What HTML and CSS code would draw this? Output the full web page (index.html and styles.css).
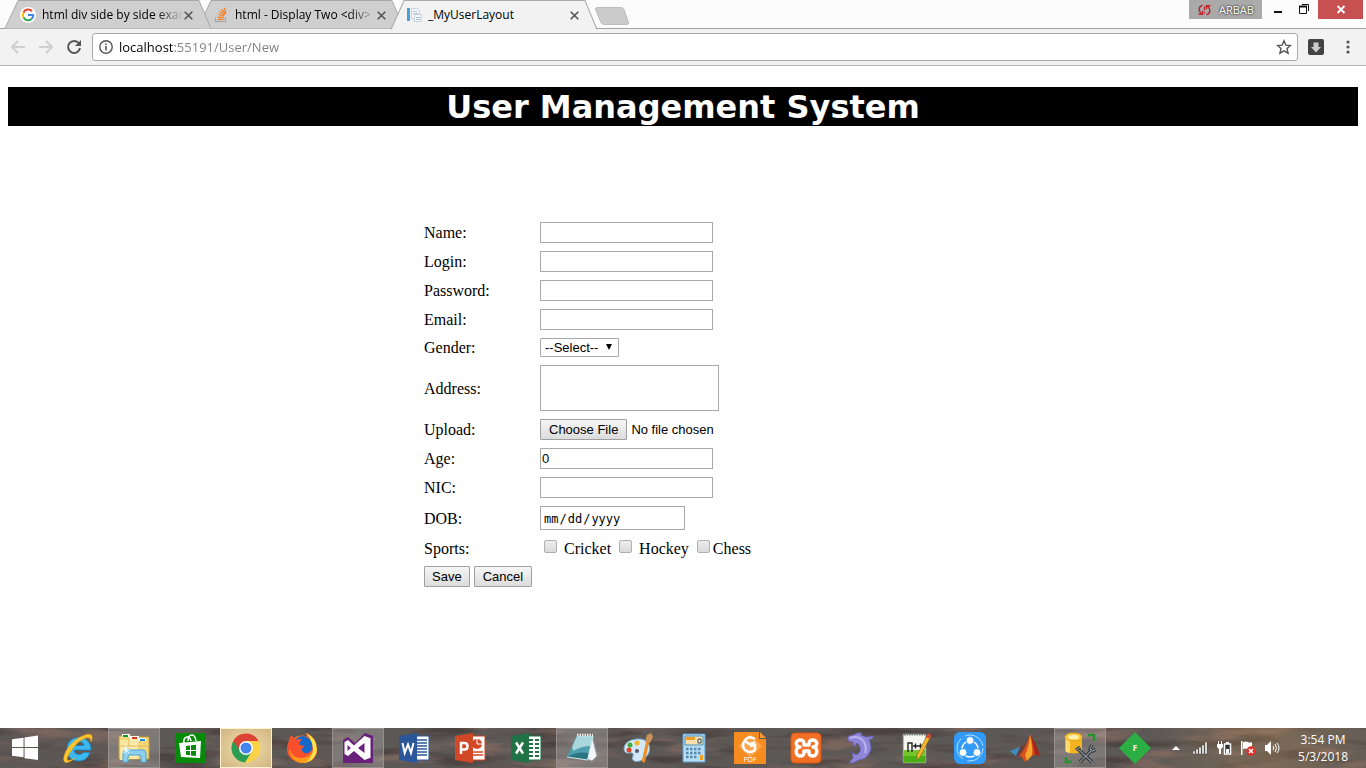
FILE: index.html
```html
<!DOCTYPE html>
<html lang="en">
<head>
<meta charset="utf-8">
<title>_MyUserLayout</title>
<link rel="stylesheet" href="styles.css">
</head>
<body>
<div class="desktop">
  <header class="tabstrip">
    <div class="tabs">
      <div class="tab tab-first">
        <svg class="tab-shape" viewBox="0 0 206 28" preserveAspectRatio="none"><path d="M0 28.500L13 .5H194L206 28.500"/></svg>
        <svg class="icon16" viewBox="0 0 16 16"><circle cx="8" cy="8" r="8" fill="#fff"/><path d="M12 4.200A5.200 5.200 0 0 0 3.500 5.500" fill="none" stroke="#ea4335" stroke-width="2"/><path d="M3.500 5.500a5.200 5.200 0 0 0 0 5" fill="none" stroke="#fbbc05" stroke-width="2"/><path d="M3.500 10.500a5.200 5.200 0 0 0 8 1.500" fill="none" stroke="#34a853" stroke-width="2"/><path d="M8 8h5.200a5 5 0 0 1-1.700 4" fill="none" stroke="#4285f4" stroke-width="2"/></svg>
        <span class="tab-title fade">html div side by side exar</span>
        <button class="tab-close" aria-label="Close tab"><svg viewBox="0 0 9 9"><path d="M.7.700l7.600 7.600M8.300.700L.7 8.300"/></svg></button>
      </div>
      <div class="tab tab-second">
        <svg class="tab-shape" viewBox="0 0 206 28" preserveAspectRatio="none"><path d="M0 28.500L13 .5H194L206 28.500"/></svg>
        <svg class="icon16" viewBox="0 0 16 16"><path d="M2.500 10v4.500h10V10" fill="none" stroke="#aaa" stroke-width="1.300"/><path d="M4.500 12.400h6M4.600 9.900l6 .8M5.300 7.200l5.600 2M6.700 4.500l4.900 3.500M8.600 2.500l3.700 4.700M11.300 1l1.700 5.600" fill="none" stroke="#f48024" stroke-width="1.300"/></svg>
        <span class="tab-title fade">html - Display Two &lt;div&gt;</span>
        <button class="tab-close" aria-label="Close tab"><svg viewBox="0 0 9 9"><path d="M.7.700l7.600 7.600M8.300.700L.7 8.300"/></svg></button>
      </div>
      <div class="tab tab-active">
        <svg class="tab-shape" viewBox="0 0 206 28" preserveAspectRatio="none"><path d="M0 28.500L13 .5H194L206 28.500"/></svg>
        <svg class="icon16" viewBox="0 0 16 16"><path d="M1 1h3v13H1z" fill="#4ba0d8"/><path d="M5.500 1.500h6l2 2V12h-8z" fill="#f1f5f9" stroke="#c9d3dd"/><path d="M7 4.500h4M7 6.500h5" stroke="#b4c6da"/><path d="M8.500 7.500h6.500v7H8.500z" fill="#fafcfd" stroke="#c3ced9"/><path d="M10 10.500h4M10 12.500h4" stroke="#a9bdd3"/></svg>
        <span class="tab-title">_MyUserLayout</span>
        <button class="tab-close" aria-label="Close tab"><svg viewBox="0 0 9 9"><path d="M.7.700l7.600 7.600M8.300.700L.7 8.300"/></svg></button>
      </div>
      <button class="new-tab" aria-label="New tab"><svg viewBox="0 0 36 18"><path d="M3 .5h24q2 0 3 2l4.500 13q.5 2-1.500 2H10q-2 0-3-2L1.500 2.500q-.5-2 1.500-2z" fill="#cbcbcb" stroke="#bdbdbd"/></svg></button>
    </div>
    <div class="window-controls">
      <button class="profile"><svg viewBox="0 0 13 12"><path d="M4.500 1.200Q1 2.500 1.200 5.500q0 2.500 2.300 4.500M.5 10.300h4V7M8.500 10.800q3.500-1.300 3.300-4.300 0-2.500-2.300-4.500M12.500 1.700h-4V5" fill="none" stroke="#c1272d" stroke-width="1.500"/><path d="M6.500 2.500v4M6.500 8v1.500" stroke="#c1272d" stroke-width="1.300"/></svg>ARBAB</button>
      <button class="win-btn" aria-label="Minimize"><svg viewBox="0 0 26 19"><path d="M9 12h8" stroke="#111" stroke-width="2"/></svg></button>
      <button class="win-btn" aria-label="Restore"><svg viewBox="0 0 26 19"><path d="M8.500 6.500h7v7h-7zM11 4.500h6.500V11" fill="none" stroke="#111"/><path d="M8 6.500h8" stroke="#111" stroke-width="2"/></svg></button>
      <button class="win-btn win-close" aria-label="Close window"><svg viewBox="0 0 45 19"><path d="M19.500 6l7 7M26.500 6l-7 7" stroke="#fff" stroke-width="1.800"/></svg></button>
    </div>
  </header>
  <nav class="toolbar">
    <button class="nav-btn" aria-label="Back"><svg viewBox="0 0 16 16"><path d="M15 8H2M8 2L2 8l6 6" fill="none" stroke="#cfcfcf" stroke-width="2"/></svg></button>
    <button class="nav-btn" aria-label="Forward"><svg viewBox="0 0 16 16"><path d="M1 8h13M8 2l6 6-6 6" fill="none" stroke="#cfcfcf" stroke-width="2"/></svg></button>
    <button class="nav-btn" aria-label="Reload"><svg viewBox="0 0 16 16"><path d="M13 4.500A6 6 0 1 0 14 9" fill="none" stroke="#555" stroke-width="2"/><path d="M15 1v6H9z" fill="#555"/></svg></button>
    <div class="omnibox">
      <svg class="icon14" viewBox="0 0 14 14"><circle cx="7" cy="7" r="6.200" fill="none" stroke="#555" stroke-width="1.400"/><path d="M7 6v4.500M7 3.500V5" stroke="#555" stroke-width="1.600"/></svg>
      <input class="url" type="text" aria-label="Address" value="localhost:55191/User/New">
      <button class="star" aria-label="Bookmark"><svg viewBox="0 0 16 16"><path d="M8 1.800l1.900 4.300 4.600.4-3.500 3.100 1.100 4.600L8 11.800l-4.100 2.400L5 9.600 1.500 6.500l4.600-.4z" fill="none" stroke="#555" stroke-width="1.400"/></svg></button>
    </div>
    <button class="nav-btn" aria-label="Downloads"><svg viewBox="0 0 16 16"><rect width="16" height="16" rx="2" fill="#424242"/><path d="M5.500 3.500h5V8H13l-5 5.500L3 8h2.500z" fill="#ccc"/></svg></button>
    <button class="nav-btn nav-menu" aria-label="Menu"><svg viewBox="0 0 16 16"><circle cx="8" cy="3" r="1.600"/><circle cx="8" cy="8" r="1.600"/><circle cx="8" cy="13" r="1.600"/></svg></button>
  </nav>

  <main class="page">
    <h1 class="banner">User Management System</h1>
    <form class="user-form">
      <label for="name">Name:</label><input class="field" id="name" type="text">
      <label for="login">Login:</label><input class="field" id="login" type="text">
      <label for="password">Password:</label><input class="field" id="password" type="password">
      <label for="email">Email:</label><input class="field" id="email" type="text">
      <label for="gender">Gender:</label>
      <div class="select-wrap"><select class="select" id="gender"><option>--Select--</option><option>Male</option><option>Female</option></select><svg class="select-arrow" viewBox="0 0 6 6"><path d="M0 0h6L3 6z"/></svg></div>
      <label for="address">Address:</label><textarea class="area" id="address"></textarea>
      <label for="upload">Upload:</label><input class="file" id="upload" type="file">
      <label for="age">Age:</label><input class="field" id="age" type="text" value="0">
      <label for="nic">NIC:</label><input class="field" id="nic" type="text">
      <label for="dob">DOB:</label><input class="date" id="dob" type="date">
      <span>Sports:</span>
      <div class="sports">
        <input class="check" id="cricket" type="checkbox"><label class="spaced" for="cricket">Cricket</label>
        <input class="check" id="hockey" type="checkbox"><label class="spaced" for="hockey">Hockey</label>
        <input class="check" id="chess" type="checkbox"><label for="chess">Chess</label>
      </div>
      <div class="actions"><button class="btn" type="button">Save</button><button class="btn btn-wide" type="button">Cancel</button></div>
    </form>
  </main>

  <footer class="taskbar">
    <svg class="wood" preserveAspectRatio="none" viewBox="0 0 1366 40">
      <filter id="grain" x="0" y="0" width="100%" height="100%" color-interpolation-filters="sRGB"><feTurbulence type="fractalNoise" baseFrequency=".016 .07" numOctaves="4" seed="8"/><feColorMatrix values="0 0 0 0 .6  0 0 0 0 .45  0 0 0 0 .4  4 0 0 0 -2"/></filter>
      <filter id="shade" x="0" y="0" width="100%" height="100%" color-interpolation-filters="sRGB"><feTurbulence type="fractalNoise" baseFrequency=".014 .09" numOctaves="4" seed="21"/><feColorMatrix values="0 0 0 0 .24  0 0 0 0 .19  0 0 0 0 .18  4 0 0 0 -2"/></filter>
      <linearGradient id="glow"><stop offset=".84" stop-color="#b58a58" stop-opacity="0"/><stop offset=".93" stop-color="#b58a58" stop-opacity=".35"/><stop offset="1" stop-color="#b58a58" stop-opacity=".1"/></linearGradient>
      <rect width="1366" height="40" fill="#5c5856"/><rect width="1366" height="40" filter="url(#grain)" opacity=".5"/><rect width="1366" height="40" filter="url(#shade)" opacity=".5"/><rect width="1366" height="40" fill="url(#glow)"/>
    </svg>
    <button class="start" aria-label="Start"><svg viewBox="0 0 28 26"><path d="M0 4l12-1.700V12H0zM13 2l14-2v12H13zM0 13h12v9.700L0 21zM13 13h14v12.500l-14-2z" fill="#fff"/></svg></button>
    <div class="apps">
      <button class="app" aria-label="Internet Explorer"><svg viewBox="0 0 32 32"><path d="M29 18H12q.7 4.500 5 4.500 3 0 4.500-2H28q-3 8.500-11 8.500C9 29 5 24 5 17S10 5.500 17 5.500 29.500 11 29 18zM12 13.500H22q-.6-4-5-4t-5 4z" fill="#3bb8ee" stroke="#1583c7" stroke-width=".7"/><path d="M7 22Q3 29 7 28.500q3-.5 7-3Q7 31 3.500 30.500-.5 29 4 19 11 7 23 3q6-2 7 1 .7 2-1 6 0-5-4-4.500Q16 7.500 7 22z" fill="#fdc62f" stroke="#e5a213" stroke-width=".6"/></svg></button>
      <button class="app app-open" aria-label="File Explorer"><svg viewBox="0 0 32 32"><path d="M1 4h12l1 2h4V5h13v22H1z" fill="#f4d778" stroke="#c99e38"/><path d="M2 8h9v20H2z" fill="#f9e6a0"/><path d="M11 6h10v21H11z" fill="#fae9a8"/><path d="M11 6.500v20M21 9v18M2 14h28" stroke="#e3bf5c"/><path d="M4 2h8v3H4z" fill="#fff"/><path d="M5 3h5v2H5z" fill="#0a9d25"/><path d="M12 4h9v3h-9z" fill="#fff"/><path d="M14 5h5v2h-5z" fill="#d93a1f"/><path d="M20 6h8v3h-8z" fill="#fff"/><path d="M22 7h5v2h-5z" fill="#168de0"/><path d="M5 30V21q0-3 3-3h17q3 0 3 3v9h-5v-5q0-2-2-2h-9q-2 0-2 2v5z" fill="#8bd0ee" stroke="#4aa7d2"/><path d="M8 13v9M4 18h8M5 15l6 6M11 15l-6 6" stroke="#e9f9ff"/></svg></button>
      <button class="app" aria-label="Store"><svg viewBox="0 0 32 32"><path d="M1 1h30v30H1z" fill="#078a09"/><path d="M5 11l22-2-1 17-19-1z" fill="#fff"/><path d="M10 11q-1-5 3-6 3-1 4 4M14 9q0-6 4-6 3 0 4 6" fill="none" stroke="#fff" stroke-width="1.500"/><path d="M12 14l4-.5V18h-4zM17 13.300l5-.5V18h-5zM12 19h4v4.200l-4-.4zM17 19h5v5l-5-.6z" fill="#078a09"/></svg></button>
      <button class="app app-current" aria-label="Chrome"><svg viewBox="0 0 32 32"><circle cx="16" cy="16" r="14.500" fill="#fbd147"/><path d="M16 16L3.400 8.700A14.500 14.500 0 0 0 15 30.500L22 19z" fill="#2c9d54"/><path d="M3.400 8.700A14.500 14.500 0 0 1 28.600 9H16L10 19z" fill="#dd4337"/><circle cx="16" cy="16" r="7" fill="#fff"/><circle cx="16" cy="16" r="5.500" fill="#4584ed"/></svg></button>
      <button class="app" aria-label="Firefox"><svg viewBox="0 0 32 32"><circle cx="16" cy="17" r="13.500" fill="#ff7021"/><circle cx="17" cy="14" r="10" fill="#1468c9"/><path d="M3 8L5 3l5 5q3-2 6 0-4 2-2 5l5 1q-4 2-3 5 3 4 8 1 4-4 2-10-1-3-5-4L20 1q11 4 11 17 0 12-15 13Q0 29 1 15z" fill="#f9502b"/><path d="M20 1q11 5 11 17-2 12-14 13 10-6 10-14 0-7-7-16z" fill="#ffe449"/><path d="M4 18q3 9 12 8 7 0 10-7-1 11-10 12Q5 30 3 18z" fill="#ff9c1c"/></svg></button>
      <button class="app app-open" aria-label="Visual Studio"><svg viewBox="0 0 32 32"><path d="M1 8L6 5l7 6L23 1l8 3v27H1z" fill="#68217a"/><path d="M2.500 10L6 8l6 5.500L22.500 4l6 2.300v19.400l-6 2.300L12 19l-6 5-3.500-2z" fill="#fff"/><path d="M5.500 13v6l3.300-3zM16 16l6.500-5v10z" fill="#68217a"/></svg></button>
      <button class="app" aria-label="Word"><svg viewBox="0 0 32 32"><path d="M18 4h13v24H18z" fill="#fff" stroke="#2b579a"/><path d="M19 8h10M19 11h10M19 14h10M19 17h10M19 20h10M19 23h10" stroke="#2b579a" stroke-width="1.500"/><path d="M1 4L19 1v30L1 28z" fill="#2b579a"/><path d="M4.500 11l2.200 10L10 12.500 13 21l2.500-10" fill="none" stroke="#fff" stroke-width="2"/></svg></button>
      <button class="app" aria-label="PowerPoint"><svg viewBox="0 0 32 32"><path d="M18 4h13v24H18z" fill="#fff" stroke="#d24726"/><circle cx="23" cy="12" r="5" fill="#d24726"/><path d="M23 12V7M23 12h5" stroke="#fff"/><path d="M19 20h10M19 23h10" stroke="#d24726" stroke-width="1.600"/><path d="M1 4L19 1v30L1 28z" fill="#d24726"/><path d="M7 22V11h3.500q3 0 3 3.300t-3 3.300H7" fill="none" stroke="#fff" stroke-width="2.500"/></svg></button>
      <button class="app" aria-label="Excel"><svg viewBox="0 0 32 32"><path d="M18 4h13v24H18z" fill="#fff" stroke="#217346"/><path d="M19 8h10M19 12h10M19 16h10M19 20h10M19 24h10" stroke="#217346" stroke-width="2" stroke-dasharray="4 2"/><path d="M1 4L19 1v30L1 28z" fill="#217346"/><path d="M6 10.500l7 11M13 10.500l-7 11" stroke="#fff" stroke-width="2.500"/></svg></button>
      <button class="app app-open" aria-label="Notepad"><svg viewBox="0 0 32 32"><path d="M26 4l5 20-5 5-5-2z" fill="#f3f6f7" stroke="#90a3ab"/><path d="M11 4h16l-5.500 24L1 25z" fill="#4f9fae"/><path d="M11 4h16l-2.500 10q-9 0-17 5L6 15z" fill="#a9d8dc"/><path d="M1 25q10-6 22-4l-1.500 7z" fill="#2b7585"/><path d="M1 25l20.500 3L27 4" fill="none" stroke="#d5eaed"/><path d="M11 3h16" stroke="#eee" stroke-width="2.500" stroke-dasharray="1.500 1"/></svg></button>
      <button class="app" aria-label="Paint"><svg viewBox="0 0 32 32"><path d="M15 7q9-1 12 6 2 7-3 12-6 6-12 4-3-2-1-5 1-4-4-3-5 1-5-5Q3 8 15 7z" fill="#d3e9f7" stroke="#7aa9cd"/><circle cx="7" cy="18" r="2.500" fill="#e04424"/><circle cx="8" cy="13" r="2.500" fill="#44aa37"/><circle cx="15" cy="11" r="2.500" fill="#f0b723"/><circle cx="15" cy="19" r="2" fill="#555b73"/><path d="M27 10l-4 20q-3 2-3-2l4-18z" fill="#ee8e24"/><path d="M23 9l2-6 4-2 2 4-3 6z" fill="#c99359"/></svg></button>
      <button class="app" aria-label="Calculator"><svg viewBox="0 0 32 32"><path d="M5 2h22v28H5z" fill="#b7dcf3" stroke="#569bcd"/><path d="M7 4h18v9H7z" fill="#f5dfae" stroke="#4b8fc1"/><path d="M8 5h9v3H8z" fill="#ec9d24"/><path d="M20 7h3v4h-3z" fill="none" stroke="#41505a"/><path d="M8 17h16M8 21h16M8 25h12" stroke="#568aaf" stroke-width="2.500" stroke-dasharray="2.500 1.500"/><path d="M22 23h3v5h-3z" fill="#eca21e"/></svg></button>
      <button class="app" aria-label="Foxit PDF"><svg viewBox="0 0 32 32"><path d="M0 0h25v7h7v25H0z" fill="#f68b1f"/><path d="M26 0l6 6h-6z" fill="#fb9a33"/><path d="M16 2L4 14l12 12 12-12z" fill="#fba64b"/><path d="M21 7q-6-4-10 1-4 6 0 10 5 4 10 0v-5l-5 1M12 9q2 5 9 1" fill="none" stroke="#fff" stroke-width="2.500"/><text class="pdf-tag" x="16" y="30" text-anchor="middle">PDF</text></svg></button>
      <button class="app" aria-label="XAMPP"><svg viewBox="0 0 32 32"><rect x="1" y="1" width="30" height="30" rx="4" fill="#f27026" stroke="#d85711"/><path d="M10 8c-5 0-5 7 0 7-5 0-5 9 0 9 4 0 4-2 4-5h5c0 3 0 5 4 5 5 0 5-9 0-9 5 0 5-7 0-7-4 0-4 2-4 5h-5c0-3 0-5-4-5z" fill="none" stroke="#fff" stroke-width="3.500" stroke-linejoin="round"/></svg></button>
    </div>
    <div class="apps apps-narrow">
      <button class="app" aria-label="MySQL"><svg viewBox="0 0 32 32"><path d="M3 6q2-3 6-3 4-3 9-2l-1 2 5 2 8-1q-1 3-5 4 4 8 0 14-4 6-10 6l-6 3H5l4-5-1-6q3 4 6 2 4-4 1-9l-2-2-3 4-1-5q-4 1-6-4z" fill="#8f86d8" stroke="#655bad" stroke-width=".8"/><path d="M6 6q9-3 14 4 3 6 1 11" fill="none" stroke="#b9b3f0" stroke-width="2"/></svg></button>
      <button class="app" aria-label="Notepad++"><svg viewBox="0 0 32 32"><path d="M4 2h23v29H4z" fill="#f7f7f2" stroke="#777"/><path d="M4.500 18h22v12.500h-22z" fill="#76c52c"/><path d="M4.500 24h22v6.500h-22z" fill="#4cae17"/><path d="M5 2.500h21" stroke="#777" stroke-width="2" stroke-dasharray="1.500 1"/><path d="M9 20v-9h4v9M14 14h5M16.500 11.500v5M19 14h5M21.500 11.500v5" fill="none" stroke="#222" stroke-width="1.400"/><path d="M29 2l3 2-11 21-3 3 0-5z" fill="#f5ba2e" stroke="#936018" stroke-width=".7"/><path d="M29 1l3 2-1 4-4-2z" fill="#cd4c33"/></svg></button>
      <button class="app" aria-label="SHAREit"><svg viewBox="0 0 32 32"><rect width="32" height="32" rx="6" fill="#329bfa"/><circle cx="16" cy="16" r="13" fill="none" stroke="#b9e1ff" stroke-dasharray="23 5"/><circle cx="16" cy="17" r="8" fill="none" stroke="#fff" stroke-width="1.500"/><g fill="#fff" stroke="#329bfa"><circle cx="16" cy="8.500" r="4"/><circle cx="9" cy="20.500" r="4"/><circle cx="23" cy="20.500" r="4"/></g></svg></button>
      <button class="app" aria-label="MATLAB"><svg viewBox="0 0 32 32"><path d="M1 19l10-4 4 4-5 6-3-1z" fill="#3c8fc5"/><path d="M11 15l5-3 5-10-3 17-8 6-3-1z" fill="#6d403c"/><path d="M21 2q4 9 10 22-5-3-9 1l-7 5-2-5-3-1q7-8 11-22z" fill="#d4501e"/><path d="M21 3q3 13 2 20l-5 6-2-6q4-8 5-20z" fill="#f6a42e"/><path d="M22 4q6 9 9 20l-5-1z" fill="#a52318"/></svg></button>
      <button class="app app-open" aria-label="SQL Server"><svg viewBox="0 0 32 32"><path d="M1 5v14q9 5 17 0V5z" fill="#f3b41f"/><path d="M2 7v13l4 1V8z" fill="#ffdc6a"/><ellipse cx="9.500" cy="5" rx="8.500" ry="4" fill="#ffd04a" stroke="#e4a010"/><ellipse cx="9.500" cy="5" rx="5" ry="2" fill="#fff1b7"/><path d="M24 3h6v6M2 25v5h6" fill="none" stroke="#28912f" stroke-width="2.500"/><path d="M15 18l13 12M28 18L16 30M12 18l4-3M28 13l-2 4 3 2 3-2" fill="none" stroke="#2c3338" stroke-width="3.200"/><path d="M15 18l13 12M28 18L16 30M12 18l4-3M28 13l-2 4 3 2 3-2" fill="none" stroke="#8a9399" stroke-width="1.200"/></svg></button>
      <button class="app" aria-label="Green app"><svg viewBox="0 0 32 32"><path d="M16 0l16 16-16 16L0 16z" fill="#2bae43"/><text class="f-tag" x="16" y="19" text-anchor="middle">F</text></svg></button>
    </div>
    <div class="tray">
      <svg class="tray-icon" viewBox="0 0 16 16"><path d="M4 10h8L8 6z" fill="#fff"/></svg>
      <svg class="tray-icon" viewBox="0 0 16 16"><path d="M1 11h2v3H1zM4 9h2v5H4zM7 7h2v7H7zM10 5h2v9h-2zM13 2h2v12h-2z" fill="#fff" stroke="#333" stroke-width=".4"/></svg>
      <svg class="tray-icon" viewBox="0 0 16 16"><path d="M8.500 4h6v10h-6z" fill="#333" stroke="#fff" stroke-width="1.500"/><path d="M10 2h3v2h-3zM10 9h3v4h-3zM1 4h6v3L5 9v5H3V9L1 7zM2 1h1v3H2zM5 1h1v3H5z" fill="#fff"/></svg>
      <svg class="tray-icon" viewBox="0 0 16 16"><path d="M1 1h1.500v14H1zM3 2q3-1 5 0 2 1 4 0v7q-3 1-5 0-2-1-4 0z" fill="#fff"/><circle cx="11" cy="11" r="4.700" fill="#df302b"/><path d="M9 9l4 4M13 9l-4 4" stroke="#fff" stroke-width="1.500"/></svg>
      <svg class="tray-icon" viewBox="0 0 16 16"><path d="M1 5h2l4-4v14l-4-4H1z" fill="#fff"/><path d="M9 6q1.500 2 0 4M11 4q3 4 0 8M13 3q4 5 0 10" fill="none" stroke="#fff"/></svg>
      <div class="clock"><span>3:54 PM</span><span>5/3/2018</span></div>
    </div>
  </footer>
</div>
</body>
</html>
```
FILE: styles.css
```css
* { box-sizing: border-box; }
body { margin: 0; background: #fff; color: #000; }
button { margin: 0; padding: 0; border: 0; background: none; }
svg { display: block; flex: none; }

.desktop { display: flex; flex-direction: column; min-height: 100vh; }

/* Tab strip */
.tabstrip {
  display: flex;
  justify-content: space-between;
  align-items: flex-start;
  height: 29px;
  background: #fcfcfc;
  border-bottom: 1px solid #a3a3a3;
  font: 12px/16px "Open Sans", "Noto Sans", sans-serif;
}
.tabs { display: flex; align-items: flex-start; padding-left: 5px; }
.tab {
  position: relative;
  display: flex;
  align-items: center;
  width: 206px;
  height: 28px;
  margin-right: -13px;
  padding: 2px 18px 0 15px;
}
.tab > * { position: relative; }
.tab > .tab-shape { position: absolute; inset: 0; width: 100%; height: 100%; overflow: visible; }
.tab-shape path { fill: #cfcfcf; stroke: #a8a8a8; }
.tab-first { z-index: 2; }
.tab-second { z-index: 1; }
.tab-active { z-index: 3; height: 29px; padding-bottom: 1px; }
.tab-active .tab-shape path { fill: #f2f2f2; }
.icon16 { width: 16px; height: 16px; }
.icon14 { width: 14px; height: 14px; }
.tab-title { flex: 1; min-width: 0; margin: 0 0 0 6px; overflow: hidden; white-space: nowrap; }
.fade { -webkit-mask-image: linear-gradient(90deg, #000 80%, transparent); mask-image: linear-gradient(90deg, #000 80%, transparent); }
.tab-close { width: 9px; height: 9px; }
.tab-close svg { width: 9px; height: 9px; stroke: #555; stroke-width: 1.6; }
.new-tab { margin: 7px 0 0 10px; }
.new-tab svg { width: 36px; height: 18px; }

.window-controls { display: flex; padding-right: 3px; }
.profile {
  display: flex;
  align-items: center;
  gap: 8px;
  width: 73px;
  height: 19px;
  margin-right: 3px;
  padding-left: 9px;
  background: #aaa;
  color: #fff;
  font: 11px/16px "Open Sans", "Noto Sans", sans-serif;
  text-shadow: 0 0 2px #333, 0 0 2px #333;
}
.profile svg { width: 13px; height: 12px; }
.win-btn svg { width: 26px; height: 19px; }
.win-close { margin-left: 1px; background: #c75050; }
.win-close svg { width: 45px; }

/* Toolbar */
.toolbar {
  display: flex;
  align-items: center;
  gap: 12px;
  height: 37px;
  padding: 0 10px;
  background: #f2f2f2;
  border-bottom: 1px solid #b6b6b6;
}
.nav-btn svg { width: 16px; height: 16px; }
.nav-menu { margin-left: 4px; fill: #555; }
.omnibox {
  display: flex;
  flex: 1;
  align-items: center;
  height: 28px;
  margin: 0 -2px 0 -2px;
  padding: 0 5px 0 6px;
  border: 1px solid #a9a9a9;
  border-radius: 3px;
  background: #fff;
}
.url {
  flex: 1;
  min-width: 0;
  margin: 0 0 0 6px;
  padding: 0;
  border: 0;
  outline: 0;
  font: 13px/20px "Open Sans", "Noto Sans", sans-serif;
  color: transparent;
  background: linear-gradient(90deg, #000 55px, #808080 55px);
  -webkit-background-clip: text;
  background-clip: text;
}
.star svg { width: 16px; height: 16px; }

/* Page */
.page { flex: 1; padding: 21px 8px 24px; font: 16px/19px "Liberation Serif", "Times New Roman", serif; }
.banner {
  margin: 0 0 96px;
  padding-top: 2px;
  background: #000;
  color: #fff;
  font: bold 32px/37px "DejaVu Sans", Verdana, sans-serif;
  text-align: center;
}
.user-form {
  display: grid;
  grid-template-columns: 108px 1fr;
  gap: 8px;
  align-items: center;
  justify-items: start;
  max-width: 518px;
  margin: 0 auto;
}
.field, .area, .date, .select, .file { margin: 0; font: 13px/15px "Liberation Sans", Arial, sans-serif; color: #000; }
.field, .area, .date, .select { border: 1px solid #a9a9a9; border-radius: 0; background: #fff; }
.field { width: 173px; height: 21px; padding: 1px; }
.area { width: 179px; height: 46px; padding: 2px; resize: none; }
.select-wrap { position: relative; }
.select { display: block; width: 79px; height: 19px; padding: 0 4px; border-radius: 1px; -webkit-appearance: none; appearance: none; }
.select-arrow { position: absolute; right: 7px; top: 6px; width: 6px; height: 6px; pointer-events: none; }
.file { height: 21px; }
.btn, .file::file-selector-button {
  height: 21px;
  padding: 0 7px;
  border: 1px solid #a0a0a0;
  border-radius: 1px;
  background: linear-gradient(#f6f6f6, #dcdcdc);
  color: #000;
  font: 13px/15px "Liberation Sans", Arial, sans-serif;
}
.btn-wide { padding: 0 8px; }
.file::file-selector-button { margin: 0 4px 0 0; padding: 0 8px; }
.date { width: 145px; height: 24px; padding: 2px 2px 0; font-family: "DejaVu Sans Mono", monospace; font-size: 12px; }
.date::-webkit-calendar-picker-indicator { display: none; }
.sports { display: flex; align-items: center; height: 20px; padding-left: 4px; }
.check {
  width: 13px;
  height: 13px;
  margin: 0 3px 3px 0;
  border: 1px solid #b0b0b0;
  border-radius: 2px;
  background: linear-gradient(#ececec, #dadada);
  -webkit-appearance: none;
  appearance: none;
}
.sports .spaced { margin: 0 8px 0 4px; }
.actions { grid-column: 1 / -1; display: flex; gap: 4px; }

/* Taskbar */
.taskbar { position: relative; display: flex; height: 40px; overflow: hidden; }
.taskbar > * { position: relative; }
.taskbar > .wood { position: absolute; inset: 0; width: 100%; height: 100%; }
.start { display: flex; align-items: center; width: 52px; padding-left: 12px; }
.start svg { width: 27px; height: 26px; }
.apps { display: flex; gap: 4px; }
.apps-narrow { gap: 3px; margin-left: 2px; }
.app { display: grid; place-items: center; width: 52px; height: 40px; border: 1px solid transparent; }
.app svg { width: 32px; height: 32px; }
.app-open { border-color: #96918e; background: rgba(255, 255, 255, .2); }
.app-current { border-color: #fff2cf; background: radial-gradient(#f3dfae, #d0b582); }
.pdf-tag { font: 7px "Open Sans", sans-serif; fill: #fff; }
.f-tag { font: bold 8px "Open Sans", sans-serif; fill: #fff; }
.tray { display: flex; flex: 1; align-items: center; justify-content: flex-end; gap: 8px; padding-right: 18px; }
.tray-icon { width: 16px; height: 16px; }
.clock {
  display: flex;
  flex-direction: column;
  align-items: center;
  margin-left: 10px;
  color: #fff;
  font: 12px/17px "Open Sans", "Noto Sans", sans-serif;
}
```
